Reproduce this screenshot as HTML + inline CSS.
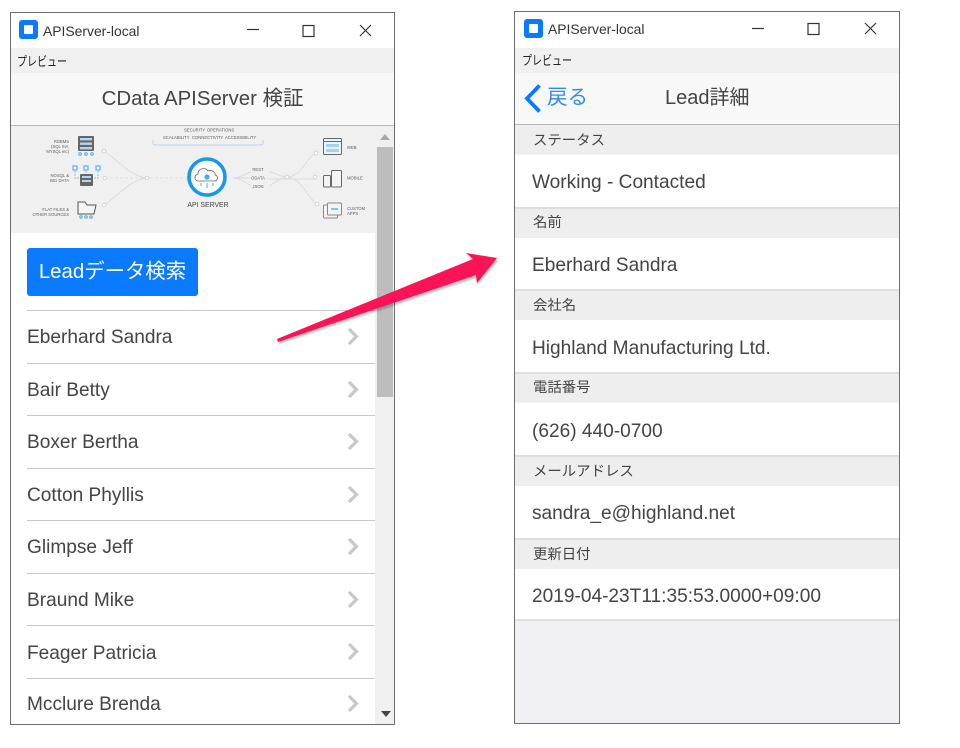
<!DOCTYPE html>
<html><head><meta charset="utf-8">
<style>
html,body{margin:0;padding:0;background:#fff}
body{width:960px;height:748px;position:relative;overflow:hidden;font-family:"Liberation Sans","Noto Sans CJK JP",sans-serif;color:#444}
.a{position:absolute;white-space:nowrap}
.win{position:absolute;box-sizing:border-box;border:1px solid #6e6e6e;background:#fff;overflow:hidden}
.ttl{font-size:13.9px;color:#333;line-height:18px}
.menu{font-size:13px;color:#222;line-height:18px;transform:scaleX(.77);transform-origin:left center}
.sep{position:absolute;height:1px;background:#c8c8c8}
.row{font-size:19.1px;line-height:24px;color:#444}
.lbl{font-size:14.4px;line-height:18px;color:#444}
.val{font-size:19.1px;line-height:24px;color:#444}
.bar{position:absolute;left:0;width:384px;background:#eeeeee}
</style></head>
<body>

<!-- LEFT WINDOW -->
<div class="win" style="left:10px;top:12px;width:385px;height:713px">
  <svg class="a" style="left:8px;top:7px" width="20" height="20" viewBox="0 0 20 20"><rect x="0" y="0" width="19" height="19" rx="3" fill="#0a7bff"/><rect x="5" y="5" width="9" height="9" rx="1" fill="#fff"/></svg>
  <div class="a ttl" style="left:32px;top:9px">APIServer-local</div>
  <svg class="a" style="left:235px;top:8px" width="140" height="20" viewBox="0 0 140 20" fill="none" stroke="#333" stroke-width="1.2"><path d="M1 8.5H13"/><rect x="57" y="4.5" width="11" height="11"/><path d="M114 4L125 15M125 4L114 15"/></svg>
  <div class="a" style="left:0;top:35px;width:384px;height:25px;background:#f0f0f0"></div>
  <div class="a menu" style="left:6px;top:40px">プレビュー</div>
  <div class="a" style="left:0;top:60px;width:384px;height:52px;background:#f8f8f8;border-bottom:1px solid #b8b8b8"></div>
  <div class="a" style="left:0;top:73px;width:383px;text-align:center;font-size:20.4px;line-height:26px;color:#444">CData APIServer 検証</div>

  <!-- diagram -->
  <svg class="a" style="left:0;top:113px;filter:blur(.25px)" width="364" height="107" viewBox="0 0 364 107">
    <rect width="364" height="107" fill="#f0f0f0"/>
    <g fill="none" stroke="#dcdcdc" stroke-width="1">
      <path d="M93 25C105 32 118 50 136 52"/>
      <path d="M94 52H180" stroke-dasharray="3 2"/>
      <path d="M93 79C105 72 118 54 136 52"/>
      <path d="M222 52C230 52 235 47 240 46M222 52H240M222 52C230 52 235 57 240 60"/>
      <path d="M258 46C265 47 270 51 276 51M258 53H304M258 60C265 56 270 51 276 51"/>
      <path d="M276 51C292 50 296 30 305 27"/>
      <path d="M276 51C292 53 296 72 306 78"/>
    </g>
    <g fill="#fff" stroke="#d5d5d5"><circle cx="93" cy="25" r="1.8"/><circle cx="94" cy="52" r="1.8"/><circle cx="93" cy="79" r="1.8"/><circle cx="136" cy="52" r="1.8"/><circle cx="276" cy="51" r="1.8"/><circle cx="305" cy="27" r="1.8"/><circle cx="304" cy="51" r="1.8"/><circle cx="306" cy="78" r="1.8"/></g>
    <path d="M142 14V17Q142 19 145 19H249Q252 19 252 17V14" fill="none" stroke="#bcd4ea"/>
    <g fill="#5c5c5c" font-size="4.2" font-family="Liberation Sans,sans-serif">
      <text x="173" y="5.5">SECURITY</text><text x="196" y="5.5">OPERATIONS</text>
      <text x="152" y="13">SCALABILITY</text><text x="181" y="13">CONNECTIVITY</text><text x="214" y="13">ACCESSIBILITY</text>
      <text x="58" y="17" text-anchor="end">RDBMS</text><text x="58" y="22" text-anchor="end">(SQL Svr,</text><text x="58" y="27" text-anchor="end">MYSQL etc)</text>
      <text x="58" y="51" text-anchor="end">NOSQL &amp;</text><text x="58" y="56" text-anchor="end">BIG DATA</text>
      <text x="58" y="85" text-anchor="end">FLAT FILES &amp;</text><text x="58" y="90" text-anchor="end">OTHER SOURCES</text>
      <text x="247" y="45" text-anchor="middle">REST</text><text x="247" y="53.5" text-anchor="middle">ODATA</text><text x="247" y="62" text-anchor="middle">JSON</text>
      <text x="336" y="23">WEB</text><text x="336" y="53.5">MOBILE</text><text x="336" y="84">CUSTOM</text><text x="336" y="89">APPS</text>
    </g>
    <!-- servers -->
    <g fill="#666">
      <rect x="67" y="10" width="16" height="15" rx="1"/>
      <rect x="69" y="48" width="13" height="12" rx="1"/>
    </g>
    <g fill="#b5d6ee"><rect x="69" y="12" width="12" height="2.4"/><rect x="69" y="16.5" width="12" height="2.4"/><rect x="69" y="21" width="12" height="2.4"/><rect x="71" y="50" width="9" height="2"/><rect x="71" y="54" width="9" height="2"/></g>
    <g fill="none" stroke="#5fb0ef" stroke-width="1.2"><circle cx="69" cy="28" r="1.3"/><circle cx="75" cy="28" r="1.3"/><circle cx="81" cy="28" r="1.3"/><rect x="62" y="40" width="4" height="4"/><rect x="73" y="40" width="4" height="4"/><rect x="85" y="40" width="4" height="4"/><circle cx="70" cy="91" r="1.2"/><circle cx="75" cy="91" r="1.2"/><circle cx="80" cy="91" r="1.2"/><path d="M64 45V52H69M87 45V52H82M75 45V48" stroke-width=".7" stroke-dasharray="2 1"/></g>
    <path d="M67 88V76H74L76 79H85L83 88Z" fill="#f4f4f4" stroke="#555"/>
    <!-- hub -->
    <circle cx="196" cy="51" r="18" fill="#fff" stroke="#1a97e8" stroke-width="3.6"/>
    <path d="M187 55C183 55 183 49 187 48C187 42 195 41 197 45C201 43 205 47 204 49C208 50 207 55 203 55Z" fill="none" stroke="#666" stroke-width=".8"/>
    <circle cx="196" cy="51" r="2.6" fill="#45a8ec"/>
    <path d="M190 57V60M196 57V62M202 57V60" stroke="#45a8ec"/>
    <text x="197" y="81" text-anchor="middle" font-size="6.9" fill="#444" font-family="Liberation Sans,sans-serif">API SERVER</text>
    <!-- right icons -->
    <rect x="312.500" y="12.500" width="18" height="16" rx="1" fill="#eaf4fb" stroke="#666"/><path d="M312 15.500H331" stroke="#666"/><rect x="315" y="18" width="13" height="3" fill="#a5d3f2"/><rect x="315" y="23" width="13" height="3" fill="#a5d3f2"/>
    <rect x="312.500" y="49.500" width="7" height="11.500" rx="1" fill="#f4f4f4" stroke="#666"/><rect x="320.500" y="44.500" width="10" height="16.500" rx="1" fill="#f4f4f4" stroke="#666"/>
    <rect x="312.500" y="79" width="14" height="13" rx="1" fill="#f4f4f4" stroke="#888"/><rect x="316.500" y="77" width="14" height="12" rx="1" fill="#f4f4f4" stroke="#888"/><path d="M320 83H327" stroke="#5fb0ef" stroke-width="1.5"/>
  </svg>

  <!-- scrollbar -->
  <div class="a" style="left:364px;top:113px;width:20px;height:598px;background:#f0f0f0"></div>
  <svg class="a" style="left:369px;top:121px" width="10" height="6"><path d="M0 6L5 0L10 6Z" fill="#a8a8a8"/></svg>
  <div class="a" style="left:366px;top:134px;width:16px;height:250px;background:#bdbdbd"></div>
  <svg class="a" style="left:370px;top:698px" width="10" height="6"><path d="M0 0H10L5 6Z" fill="#444"/></svg>

  <div class="a" style="left:16px;top:235px;width:171px;height:48px;background:#0a7bff;border-radius:3px;color:#fff;font-size:20.4px;line-height:48px;text-align:center">Leadデータ検索</div>

  <div class="sep" style="left:16px;top:297px;width:348px"></div>
  <div class="sep" style="left:16px;top:350px;width:348px"></div>
  <div class="sep" style="left:16px;top:402px;width:348px"></div>
  <div class="sep" style="left:16px;top:455px;width:348px"></div>
  <div class="sep" style="left:16px;top:507px;width:348px"></div>
  <div class="sep" style="left:16px;top:560px;width:348px"></div>
  <div class="sep" style="left:16px;top:612px;width:348px"></div>
  <div class="sep" style="left:16px;top:665px;width:348px"></div>

  <div class="a row" style="left:16px;top:313px">Eberhard Sandra</div>
  <div class="a row" style="left:16px;top:366px">Bair Betty</div>
  <div class="a row" style="left:16px;top:418px">Boxer Bertha</div>
  <div class="a row" style="left:16px;top:471px">Cotton Phyllis</div>
  <div class="a row" style="left:16px;top:523px">Glimpse Jeff</div>
  <div class="a row" style="left:16px;top:576px">Braund Mike</div>
  <div class="a row" style="left:16px;top:629px">Feager Patricia</div>
  <div class="a row" style="left:16px;top:680px">Mcclure Brenda</div>

  <svg class="a" style="left:336px;top:310px" width="14" height="400" fill="none" stroke="#c8c8c8" stroke-width="3.2">
    <path d="M2 6L9.500 13.500L2 21"/><path d="M2 59L9.500 66.500L2 74"/><path d="M2 111L9.500 118.500L2 126"/><path d="M2 164L9.500 171.500L2 179"/><path d="M2 216L9.500 223.500L2 231"/><path d="M2 269L9.500 276.500L2 284"/><path d="M2 321L9.500 328.500L2 336"/><path d="M2 373L9.500 380.500L2 388"/>
  </svg>
</div>

<!-- RIGHT WINDOW -->
<div class="win" style="left:514px;top:11px;width:386px;height:713px;background:#efeff4">
  <div class="a" style="left:0;top:0;width:384px;height:36px;background:#fff"></div>
  <svg class="a" style="left:9px;top:7px" width="20" height="20" viewBox="0 0 20 20"><rect x="0" y="0" width="19" height="19" rx="3" fill="#0a7bff"/><rect x="5" y="5" width="9" height="9" rx="1" fill="#fff"/></svg>
  <div class="a ttl" style="left:33px;top:8px">APIServer-local</div>
  <svg class="a" style="left:236px;top:7px" width="140" height="20" viewBox="0 0 140 20" fill="none" stroke="#333" stroke-width="1.2"><path d="M1 9.500H13"/><rect x="57" y="4.500" width="11" height="11"/><path d="M114 4L125 15M125 4L114 15"/></svg>
  <div class="a" style="left:0;top:36px;width:384px;height:25px;background:#f0f0f0"></div>
  <div class="a menu" style="left:7px;top:40px">プレビュー</div>
  <div class="a" style="left:0;top:61px;width:384px;height:51px;background:#f8f8f8;border-bottom:1px solid #b8b8b8"></div>
  <svg class="a" style="left:9px;top:72px" width="18" height="30" fill="none" stroke="#0a7bff" stroke-width="3.8"><path d="M15.500 1.500L3 14.500L15.500 27.500"/></svg>
  <div class="a" style="left:32px;top:73px;font-size:20.5px;line-height:26px;color:#2f8cf5">戻る</div>
  <div class="a" style="left:150px;top:73px;font-size:20px;line-height:26px;color:#444">Lead詳細</div>

  <div class="bar" style="top:113px;height:30px"></div>
  <div class="bar" style="top:143px;height:52px;background:#fff"></div>
  <div class="bar" style="top:195px;height:2px;background:#dedede"></div>
  <div class="bar" style="top:197px;height:29px"></div>
  <div class="bar" style="top:226px;height:51px;background:#fff"></div>
  <div class="bar" style="top:277px;height:2px;background:#dedede"></div>
  <div class="bar" style="top:279px;height:29px"></div>
  <div class="bar" style="top:308px;height:52px;background:#fff"></div>
  <div class="bar" style="top:360px;height:2px;background:#dedede"></div>
  <div class="bar" style="top:362px;height:29px"></div>
  <div class="bar" style="top:391px;height:52px;background:#fff"></div>
  <div class="bar" style="top:443px;height:2px;background:#dedede"></div>
  <div class="bar" style="top:445px;height:29px"></div>
  <div class="bar" style="top:474px;height:52px;background:#fff"></div>
  <div class="bar" style="top:526px;height:2px;background:#dedede"></div>
  <div class="bar" style="top:528px;height:29px"></div>
  <div class="bar" style="top:557px;height:50px;background:#fff"></div>
  <div class="bar" style="top:607px;height:2px;background:#dedede"></div>

  <div class="a lbl" style="left:18px;top:120px">ステータス</div>
  <div class="a val" style="left:17px;top:159px">Working - Contacted</div>
  <div class="a lbl" style="left:18px;top:202px">名前</div>
  <div class="a val" style="left:17px;top:242px">Eberhard Sandra</div>
  <div class="a lbl" style="left:18px;top:285px">会社名</div>
  <div class="a val" style="left:17px;top:325px">Highland Manufacturing Ltd.</div>
  <div class="a lbl" style="left:18px;top:367px">電話番号</div>
  <div class="a val" style="left:17px;top:408px">(626) 440-0700</div>
  <div class="a lbl" style="left:18px;top:451px">メールアドレス</div>
  <div class="a val" style="left:17px;top:490px">sandra_e@highland.net</div>
  <div class="a lbl" style="left:18px;top:534px">更新日付</div>
  <div class="a val" style="left:17px;top:573px">2019-04-23T11:35:53.0000+09:00</div>
</div>

<!-- ARROW -->
<svg class="a" style="left:0;top:0" width="960" height="748">
  <path d="M279 344L476 278L477 285L499 260L468 256L474 262L278 340Z" fill="#000" opacity=".25" style="filter:blur(1px)"/>
  <path d="M278 342L476 275L477 283L497 258L466 253L473 259L277 339Z" fill="#fb1358"/>
</svg>
</body></html>
